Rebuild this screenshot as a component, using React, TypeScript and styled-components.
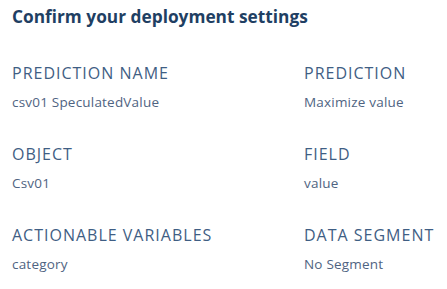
import styled, { createGlobalStyle } from 'styled-components'

const GlobalStyle = createGlobalStyle`
  body {
    margin: 0;
    background: #fff;
    font-family: "Open Sans", "Noto Sans", sans-serif;
  }
`

const Panel = styled.div`
  width: 447px;
  height: 289px;
  padding: 6px 12px 0;
  box-sizing: border-box;
`

const Title = styled.h2`
  margin: 0 0 34px;
  font-size: 17.3px;
  font-weight: 700;
  line-height: 22px;
  color: #1f3f63;
`

const Grid = styled.div`
  display: grid;
  grid-template-columns: 292px 1fr;
  row-gap: 32px;
`

const Field = styled.div`
  display: flex;
  flex-direction: column;
  gap: 9px;
`

const Label = styled.div`
  font-size: 16px;
  line-height: 22px;
  letter-spacing: 1px;
  text-transform: uppercase;
  color: #3f5e84;
`

const Value = styled.div`
  font-size: 13.5px;
  line-height: 18px;
  letter-spacing: 0.2px;
  color: #4f6482;
`

const fields = [
  { label: 'Prediction Name', value: 'csv01 SpeculatedValue' },
  { label: 'Prediction', value: 'Maximize value' },
  { label: 'Object', value: 'Csv01' },
  { label: 'Field', value: 'value' },
  { label: 'Actionable Variables', value: 'category' },
  { label: 'Data Segment', value: 'No Segment' },
]

function App (): JSX.Element {
  return (
    <Panel>
      <GlobalStyle />
      <Title>Confirm your deployment settings</Title>
      <Grid>
        {fields.map(f => (
          <Field key={f.label}>
            <Label>{f.label}</Label>
            <Value>{f.value}</Value>
          </Field>
        ))}
      </Grid>
    </Panel>
  )
}

export default App
